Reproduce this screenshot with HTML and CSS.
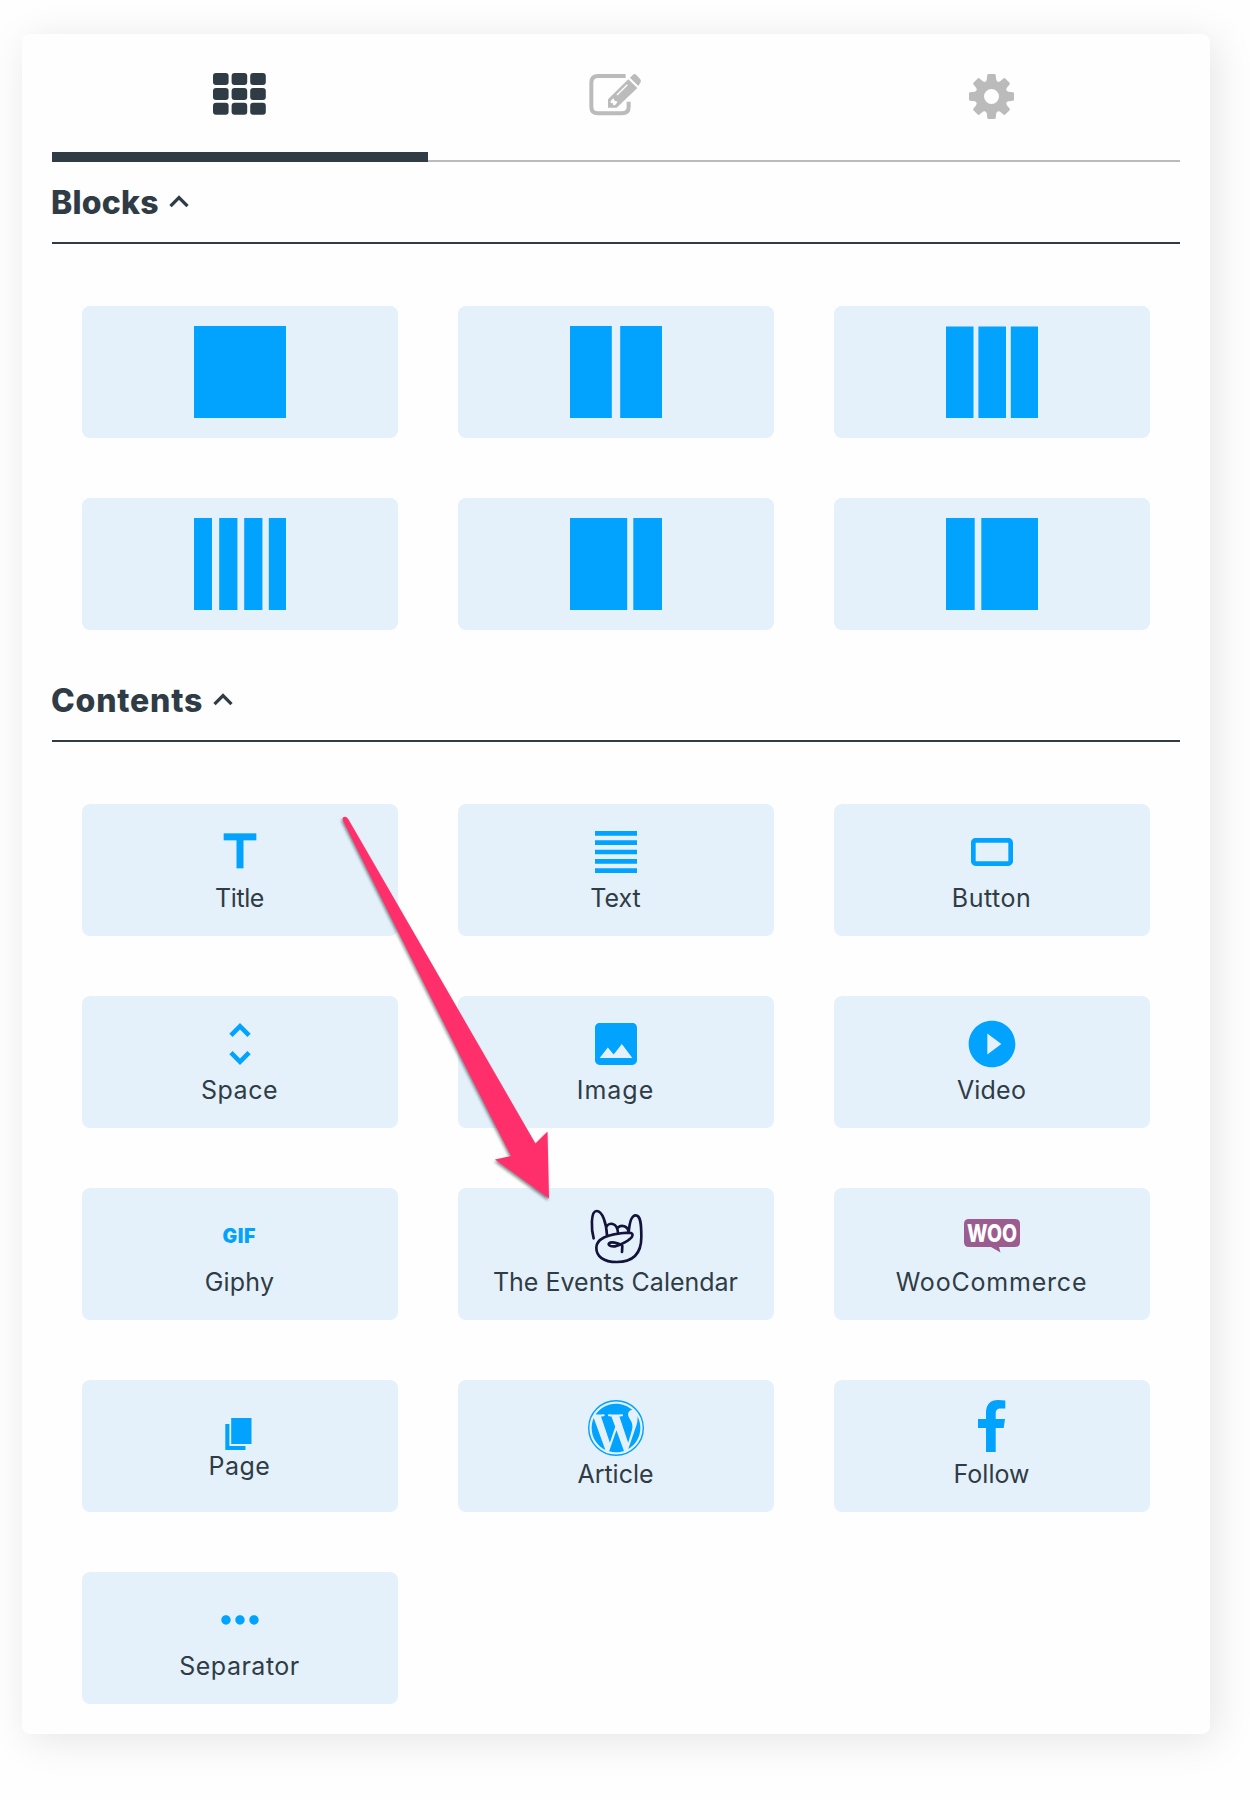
FILE: index.html
```html
<!DOCTYPE html>
<html lang="en">
<head>
<meta charset="utf-8">
<title>Blocks</title>
<link rel="stylesheet" href="styles.css">
</head>
<body>
<main class="panel">
  <nav class="tabs">
    <div class="tab active">
      <svg class="tab-grid" viewBox="0 0 53 42"><g id="r"><rect width="15.6" height="12" rx="3"/><rect x="18.6" width="15.6" height="12" rx="3"/><rect x="37.2" width="15.6" height="12" rx="3"/></g><use href="#r" y="14.9"/><use href="#r" y="29.8"/></svg>
    </div>
    <div class="tab">
      <svg class="tab-edit" viewBox="84 64 164 134"><path d="M197 76H114Q94 76 94 96V168Q94 188 114 188H186Q206 188 206 168V153" fill="none" stroke="#bbb" stroke-width="12"/><path d="M144 171V146L205 86L232 112L170 171ZM210 81L219 72Q224 68 229 73L241 86Q245 91 241 96L235 106Z"/><path d="M171 133L202 102" stroke="#fefefe" stroke-width="4"/><path d="M152 151L160 143L164 150L173 153L165 164L159 163V158L152 157Z" fill="#fefefe"/></svg>
    </div>
    <div class="tab">
      <svg class="tab-gear" viewBox="-22.5 -22.5 45 45"><circle r="11.8" fill="none" stroke="#bbb" stroke-width="8.6"/><g id="t"><path id="u" d="M-7.5 -13.5Q-5 -15 -4.7 -17L-4.2 -21.5Q-4 -22.5 -3 -22.5H3Q4 -22.5 4.2 -21.5L4.7 -17Q5 -15 7.5 -13.5Z"/><use href="#u" transform="rotate(90)"/><use href="#u" transform="rotate(180)"/><use href="#u" transform="rotate(270)"/></g><use href="#t" transform="rotate(45)"/></svg>
    </div>
  </nav>

  <h2 class="heading">
    <span class="h-blocks">Blocks</span>
    <svg class="chevron" viewBox="0 0 20 13"><path d="M1.5 11.2L10 2.7L18.5 11.2"/></svg>
  </h2>
  <section class="grid">
    <div class="card"><svg class="icon layout" viewBox="0 0 92 92"><path d="M0 0h92v92H0z"/></svg></div>
    <div class="card"><svg class="icon layout" viewBox="0 0 92 92"><path d="M0 0h41.8v92H0zM50.2 0H92v92H50.2z"/></svg></div>
    <div class="card"><svg class="icon layout" viewBox="0 0 92 92"><path d="M0 .6h27.5V92H0zM32.4 .6H60V92H32.4zM64.8 .6H92V92H64.8z"/></svg></div>
    <div class="card"><svg class="icon layout" viewBox="0 0 92 92"><path d="M0 0h18v92H0zM25.2 0h18.2v92H25.2zM50.2 0h18.2v92H50.2zM74.8 0H92v92H74.8z"/></svg></div>
    <div class="card"><svg class="icon layout" viewBox="0 0 92 92"><path d="M0 0h57.2v92H0zM63.3 0H92v92H63.3z"/></svg></div>
    <div class="card"><svg class="icon layout" viewBox="0 0 92 92"><path d="M0 0h28.7v92H0zM35.3 0H92v92H35.3z"/></svg></div>
  </section>

  <h2 class="heading">
    <span class="h-contents">Contents</span>
    <svg class="chevron" viewBox="0 0 20 13"><path d="M1.5 11.2L10 2.7L18.5 11.2"/></svg>
  </h2>
  <section class="grid contents">
    <div class="card">
      <svg class="icon" viewBox="0 0 24 24"><rect x="5" y="4" width="14" height="3"/><rect x="10.5" y="6" width="3" height="13"/></svg>
      <span class="label l-title">Title</span>
    </div>
    <div class="card">
      <svg class="icon" viewBox="0 0 24 24"><path d="M3 21h18v-2H3v2zm0-4h18v-2H3v2zm0-4h18v-2H3v2zm0-4h18V7H3v2zm0-6v2h18V3H3z"/></svg>
      <span class="label">Text</span>
    </div>
    <div class="card">
      <svg class="icon" viewBox="0 0 24 24"><path d="M19 6H5c-1.1 0-2 .9-2 2v8c0 1.1.9 2 2 2h14c1.1 0 2-.9 2-2V8c0-1.1-.9-2-2-2zm0 10H5V8h14v8z"/></svg>
      <span class="label l-wide">Button</span>
    </div>
    <div class="card">
      <svg class="icon" viewBox="0 0 24 24"><path d="M12 5.83L15.17 9l1.41-1.41L12 3 7.41 7.59 8.83 9 12 5.83zm0 12.34L8.83 15l-1.41 1.41L12 21l4.59-4.59L15.17 15 12 18.17z"/></svg>
      <span class="label l-wide">Space</span>
    </div>
    <div class="card">
      <svg class="icon" viewBox="0 0 24 24"><path d="M21 19V5c0-1.1-.9-2-2-2H5c-1.1 0-2 .9-2 2v14c0 1.1.9 2 2 2h14c1.1 0 2-.9 2-2zM8.500 13.500l2.500 3.010L14.500 12l4.500 6H5l3.500-4.500z"/></svg>
      <span class="label l-wider">Image</span>
    </div>
    <div class="card">
      <svg class="icon" viewBox="0 0 24 24"><path d="M12 2C6.480 2 2 6.480 2 12s4.480 10 10 10 10-4.480 10-10S17.520 2 12 2zm-2 14.500v-9l6 4.500-6 4.500z"/></svg>
      <span class="label l-loose">Video</span>
    </div>
    <div class="card">
      <svg class="icon" viewBox="0 0 56 56"><text class="gif" x="10.500" y="35">GIF</text></svg>
      <span class="label l-loose">Giphy</span>
    </div>
    <div class="card">
      <svg class="icon hand" viewBox="324 263 168 168"><path d="M341 354C334 330 331 272 350 272C368 272 379 310 381 345M379 320C385 306 412 304 414 338M414 322C423 312 444 316 446 336M446 338C448 310 454 285 467 285C482 285 484 310 484 350C484 398 462 425 410 425C370 425 349 408 349 382C349 350 395 340 446 337C457 337 460 342 456 349C450 358 425 374 405 378C386 380 382 370 390 367C402 364 424 371 427 377L426 395"/></svg>
      <span class="label">The Events Calendar</span>
    </div>
    <div class="card">
      <svg class="icon" viewBox="0 0 56 56"><path fill="#9b5c8f" d="M5 11H51Q56 11 56 16V34Q56 39 51 39H35L36.500 44.500L27 39H5Q0 39 0 34V16Q0 11 5 11Z"/><text class="woo" x="3" y="33.500" textLength="50" lengthAdjust="spacingAndGlyphs">WOO</text></svg>
      <span class="label l-woo">WooCommerce</span>
    </div>
    <div class="card card-page">
      <svg class="pages" viewBox="0 0 27 32"><path d="M6.200 0H26.500V26H6.200zM.3 6H4.400V28H20.500V32H.3z"/></svg>
      <span class="label l-wide">Page</span>
    </div>
    <div class="card">
      <svg class="icon" viewBox="0 0 24 24"><circle cx="12" cy="12" r="11.700" fill="none" stroke="#02a2ff" stroke-width=".6"/><path transform="translate(.4 .4) scale(.967)" d="M21.469 6.825c.84 1.537 1.318 3.300 1.318 5.175 0 3.979-2.156 7.456-5.363 9.325l3.295-9.527c.615-1.540.820-2.771.820-3.864 0-.405-.026-.780-.070-1.110m-7.981.105c.647-.030 1.232-.105 1.232-.105.582-.075.514-.930-.067-.899 0 0-1.755.135-2.880.135-1.064 0-2.850-.150-2.850-.150-.585-.030-.661.855-.075.885 0 0 .540.061 1.125.090l1.680 4.605-2.370 7.080L5.354 6.900c.649-.030 1.234-.100 1.234-.100.585-.075.516-.930-.065-.896 0 0-1.746.138-2.874.138-.200 0-.438-.008-.690-.015C4.911 3.150 8.235 1.215 12 1.215c2.809 0 5.365 1.072 7.286 2.833-.046-.003-.091-.009-.141-.009-1.060 0-1.812.923-1.812 1.914 0 .890.513 1.643 1.060 2.531.411.720.890 1.643.890 2.977 0 .915-.354 1.994-.821 3.479l-1.075 3.585-3.900-11.610zM12 22.784c-1.059 0-2.081-.153-3.048-.437l3.237-9.406 3.315 9.087c.024.053.050.101.078.149-1.120.393-2.325.609-3.582.609M1.211 12c0-1.564.336-3.050.935-4.390L7.290 21.709C3.694 19.960 1.212 16.271 1.211 12"/></svg>
      <span class="label">Article</span>
    </div>
    <div class="card">
      <svg class="icon" viewBox="0 0 56 56"><path d="M22 52V28H14V19H22V12.500C22 4.500 26.500 0 34 0Q38 0 41.300.5V8.500H37C33 8.500 31.700 10.500 31.700 13.500V19H41L39.700 28H31.700V52Z"/></svg>
      <span class="label">Follow</span>
    </div>
    <div class="card">
      <svg class="icon" viewBox="0 0 24 24"><path d="M6 10c-1.100 0-2 .9-2 2s.9 2 2 2 2-.9 2-2-.9-2-2-2zm12 0c-1.100 0-2 .9-2 2s.9 2 2 2 2-.9 2-2-.9-2-2-2zm-6 0c-1.100 0-2 .9-2 2s.9 2 2 2 2-.9 2-2-.9-2-2-2z"/></svg>
      <span class="label l-wide">Separator</span>
    </div>
  </section>
</main>
<svg class="arrow" viewBox="330 800 240 420"><path d="M343 820.500Q341.500 817 345 816.700Q347 816.500 348.500 819.500Q447 990 535.500 1143.500L547.500 1131.500L549 1198.500L495 1159.500L511 1156Q434 1005 343 820.500Z"/></svg>
</body>
</html>
```
FILE: styles.css
```css
* { box-sizing: border-box; }

body {
  margin: 0;
  height: 1800px;
  padding: 34px 40px 66px 22px;
  position: relative;
  overflow: hidden;
  background: #fefefe;
  color: #303c45;
  font-family: Inter, "Liberation Sans", sans-serif;
}

svg { display: block; flex: none; }

.panel {
  height: 1700px;
  padding: 0 30px;
  border-radius: 8px;
  background: #fefefe;
  box-shadow: 6px 6px 40px rgba(0, 0, 0, .1);
}

.tabs {
  display: grid;
  grid-template-columns: repeat(3, 1fr);
  height: 128px;
}
.tab {
  display: flex;
  justify-content: center;
  align-items: flex-start;
  padding-right: 1.500px;
  border-bottom: 2px solid #bbb;
  fill: #bbb;
}
.tab.active { border-bottom: 10px solid #303c45; fill: #303c45; }
.tab-grid { width: 53px; height: 42px; margin-top: 39px; }
.tab-edit { width: 54.670px; height: 44.670px; margin-top: 37.600px; }
.tab-gear { width: 45px; height: 45px; margin-top: 39.500px; }

.heading {
  display: flex;
  align-items: center;
  height: 82px;
  margin: 0;
  border-bottom: 2px solid #303c45;
  font-size: 32px;
  font-weight: 800;
}
.h-blocks { margin-left: -1px; letter-spacing: .2px; }
.h-contents { margin-left: -1px; letter-spacing: .8px; }
.chevron {
  width: 20px;
  height: 13px;
  margin: 0 0 1px 10px;
  fill: none;
  stroke: #303c45;
  stroke-width: 3.300;
}

.grid {
  display: grid;
  grid-template-columns: repeat(3, 316px);
  grid-auto-rows: 132px;
  gap: 60px;
  padding: 62px 30px 30px;
}
.card {
  display: flex;
  flex-direction: column;
  align-items: center;
  padding-top: 20px;
  border-radius: 8px;
  background: #e4f1fb;
  fill: #02a2ff;
}
.contents .card { padding-right: 1px; }
.icon { width: 56px; height: 56px; }
.layout { width: 92px; height: 92px; }
.contents .card-page { padding-top: 38px; }
.pages { width: 27px; height: 32px; margin: 0 2px -2px 0; }
.hand {
  fill: none;
  stroke: #14133b;
  stroke-width: 8;
  stroke-linecap: round;
  stroke-linejoin: round;
}
.gif { font-size: 19.500px; font-weight: 900; letter-spacing: .6px; }
.woo { font-size: 24px; font-weight: 800; fill: #fff; }

.label {
  margin-top: -.500px;
  font-size: 25px;
  line-height: 36px;
  white-space: nowrap;
}
.l-title { letter-spacing: -.4px; }
.l-loose { letter-spacing: .2px; }
.l-wide { letter-spacing: .5px; }
.l-wider { letter-spacing: 1px; }
.l-woo { letter-spacing: .8px; }

.arrow {
  position: absolute;
  left: 330px;
  top: 800px;
  width: 240px;
  height: 420px;
  fill: #ff2f6c;
  filter: drop-shadow(-1px 2px 1.500px rgba(0, 0, 0, .45));
}
```
